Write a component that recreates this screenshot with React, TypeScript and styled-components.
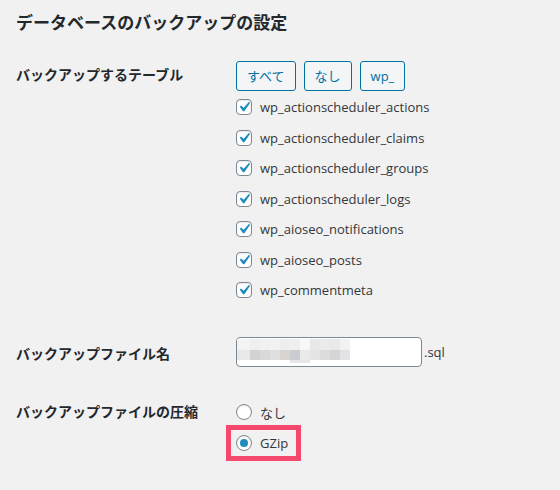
import React from "react";
import styled, { createGlobalStyle } from "styled-components";

const Global = createGlobalStyle`
  html, body { margin: 0; padding: 0; background: #f1f1f1; }
  body { font-family: "Open Sans", "Noto Sans CJK JP", sans-serif; color: #32373c; }
  * { box-sizing: border-box; }
`;

const Page = styled.div`
  width: 560px;
  height: 490px;
  padding: 0 16px;
  background: #f1f1f1;
`;

const Title = styled.h2`
  margin: 10px 0 0;
  font-family: "Noto Sans CJK JP", sans-serif;
  font-size: 17px;
  line-height: 24px;
  font-weight: 700;
  color: #23282d;
`;

const Row = styled.div<{ $top: number }>`
  display: grid;
  grid-template-columns: 220px 1fr;
  margin-top: ${(p) => p.$top}px;
`;

const Label = styled.div<{ $pad: number }>`
  padding-top: ${(p) => p.$pad}px;
  font-family: "Noto Sans CJK JP", sans-serif;
  font-size: 14px;
  line-height: 20px;
  font-weight: 700;
  color: #23282d;
`;

const Cell = styled.div`
  display: flex;
  flex-direction: column;
  align-items: flex-start;
`;

const ButtonBar = styled.div`
  display: flex;
  gap: 8px;
`;

const Button = styled.button`
  height: 30px;
  padding: 0 10px;
  border: 1px solid #0071a1;
  border-radius: 3px;
  background: #f3f5f6;
  color: #0071a1;
  font-family: "Open Sans", "Noto Sans CJK JP", sans-serif;
  font-size: 13px;
  line-height: 28px;
  cursor: pointer;
`;

const CheckList = styled.div`
  margin-top: 1px;
  display: flex;
  flex-direction: column;
`;

const CheckRow = styled.label`
  height: 30.5px;
  display: flex;
  align-items: center;
  gap: 8px;
  font-size: 13px;
  color: #32373c;
`;

const Box = styled.span`
  width: 16px;
  height: 16px;
  flex: none;
  border: 1px solid #7e8993;
  border-radius: 4px;
  background: #fff;
  box-shadow: inset 0 1px 2px rgba(0, 0, 0, 0.1);
  display: flex;
  align-items: center;
  justify-content: center;
  overflow: visible;
`;

const CheckSvg = styled.svg`
  width: 20px;
  height: 20px;
  flex: none;
  margin: -2px;
`;

const InputLine = styled.div`
  display: flex;
  align-items: center;
  gap: 2px;
  font-size: 13px;
  color: #32373c;
`;

const Input = styled.div`
  width: 186px;
  height: 30px;
  padding: 1px 0 0 0;
  border: 1px solid #7e8993;
  border-radius: 4px;
  background: #fff;
  display: flex;
  align-items: flex-start;
`;

const Radios = styled.div`
  padding-top: 3px;
  display: flex;
  flex-direction: column;
  align-items: flex-start;
  gap: 15px;
`;

const RadioRow = styled.label<{ $mark?: boolean }>`
  height: 16px;
  display: inline-flex;
  align-items: center;
  gap: 8px;
  padding-right: ${(p) => (p.$mark ? 3 : 0)}px;
  font-size: 13px;
  color: #32373c;
  outline: ${(p) => (p.$mark ? "5px solid #f4496d" : "none")};
  outline-offset: 5px;
`;

const Radio = styled.span<{ $on?: boolean }>`
  width: 16px;
  height: 16px;
  flex: none;
  border: 1px solid #7e8993;
  border-radius: 50%;
  background: #fff;
  box-shadow: inset 0 1px 2px rgba(0, 0, 0, 0.1);
  display: flex;
  align-items: center;
  justify-content: center;
  &::before {
    content: "";
    width: 8px;
    height: 8px;
    border-radius: 50%;
    background: ${(p) => (p.$on ? "#1e8cbe" : "transparent")};
  }
`;

const tables = [
  "wp_actionscheduler_actions",
  "wp_actionscheduler_claims",
  "wp_actionscheduler_groups",
  "wp_actionscheduler_logs",
  "wp_aioseo_notifications",
  "wp_aioseo_posts",
  "wp_commentmeta",
];

const row1 = ["#f3f3f3", "#efefef", "#f1f1f1", "#f2f2f2", "#eeeeee", "#efefef", "#f8f8f8", "#e8e8e8", "#ebebeb", "#e9e9e9", "#f2f2f2"];
const row2 = ["#e8e9e7", "#d3d3d3", "#d9d9d9", "#dfdfdf", "#d8d5d1", "#c9ccd0", "#e9eaec", "#e5e5e5", "#dcdcdc", "#d5d5d5", "#e3e3e7"];

const cellX = (i: number) => (i === 0 ? 0 : 13 + (i - 1) * 10);
const cellW = (i: number) => (i === 0 ? 13 : 10);

const Mosaic = () => (
  <svg width="114" height="25" viewBox="0 0 114 25" style={{ display: "block" }}>
    {row1.map((c, i) => (
      <rect key={"a" + i} x={cellX(i)} y={0} width={cellW(i)} height={11} fill={c} />
    ))}
    {row2.map((c, i) => (
      <rect key={"b" + i} x={cellX(i)} y={11} width={cellW(i)} height={10} fill={c} />
    ))}
    <rect x={53} y={21} width={20} height={3} fill="#e6e6e8" />
  </svg>
);

const Check = () => (
  <Box>
    <CheckSvg viewBox="0 0 20 20">
      <path d="M14.83 4.89l1.34.94-5.81 8.38H9.02L5.78 9.67l1.34-1.25 2.57 2.4z" fill="#1e8cbe" />
    </CheckSvg>
  </Box>
);

export default function App() {
  return (
    <Page>
      <Global />
      <Title>データベースのバックアップの設定</Title>
      <Row $top={27}>
        <Label $pad={3}>バックアップするテーブル</Label>
        <Cell>
          <ButtonBar>
            <Button>すべて</Button>
            <Button>なし</Button>
            <Button>wp_</Button>
          </ButtonBar>
          <CheckList>
            {tables.map((t) => (
              <CheckRow key={t}>
                <Check />
                {t}
              </CheckRow>
            ))}
          </CheckList>
        </Cell>
      </Row>
      <Row $top={31.5}>
        <Label $pad={6}>バックアップファイル名</Label>
        <Cell>
          <InputLine>
            <Input>
              <Mosaic />
            </Input>
            .sql
          </InputLine>
        </Cell>
      </Row>
      <Row $top={34}>
        <Label $pad={0}>バックアップファイルの圧縮</Label>
        <Radios>
          <RadioRow>
            <Radio />
            なし
          </RadioRow>
          <RadioRow $mark>
            <Radio $on />
            GZip
          </RadioRow>
        </Radios>
      </Row>
    </Page>
  );
}
